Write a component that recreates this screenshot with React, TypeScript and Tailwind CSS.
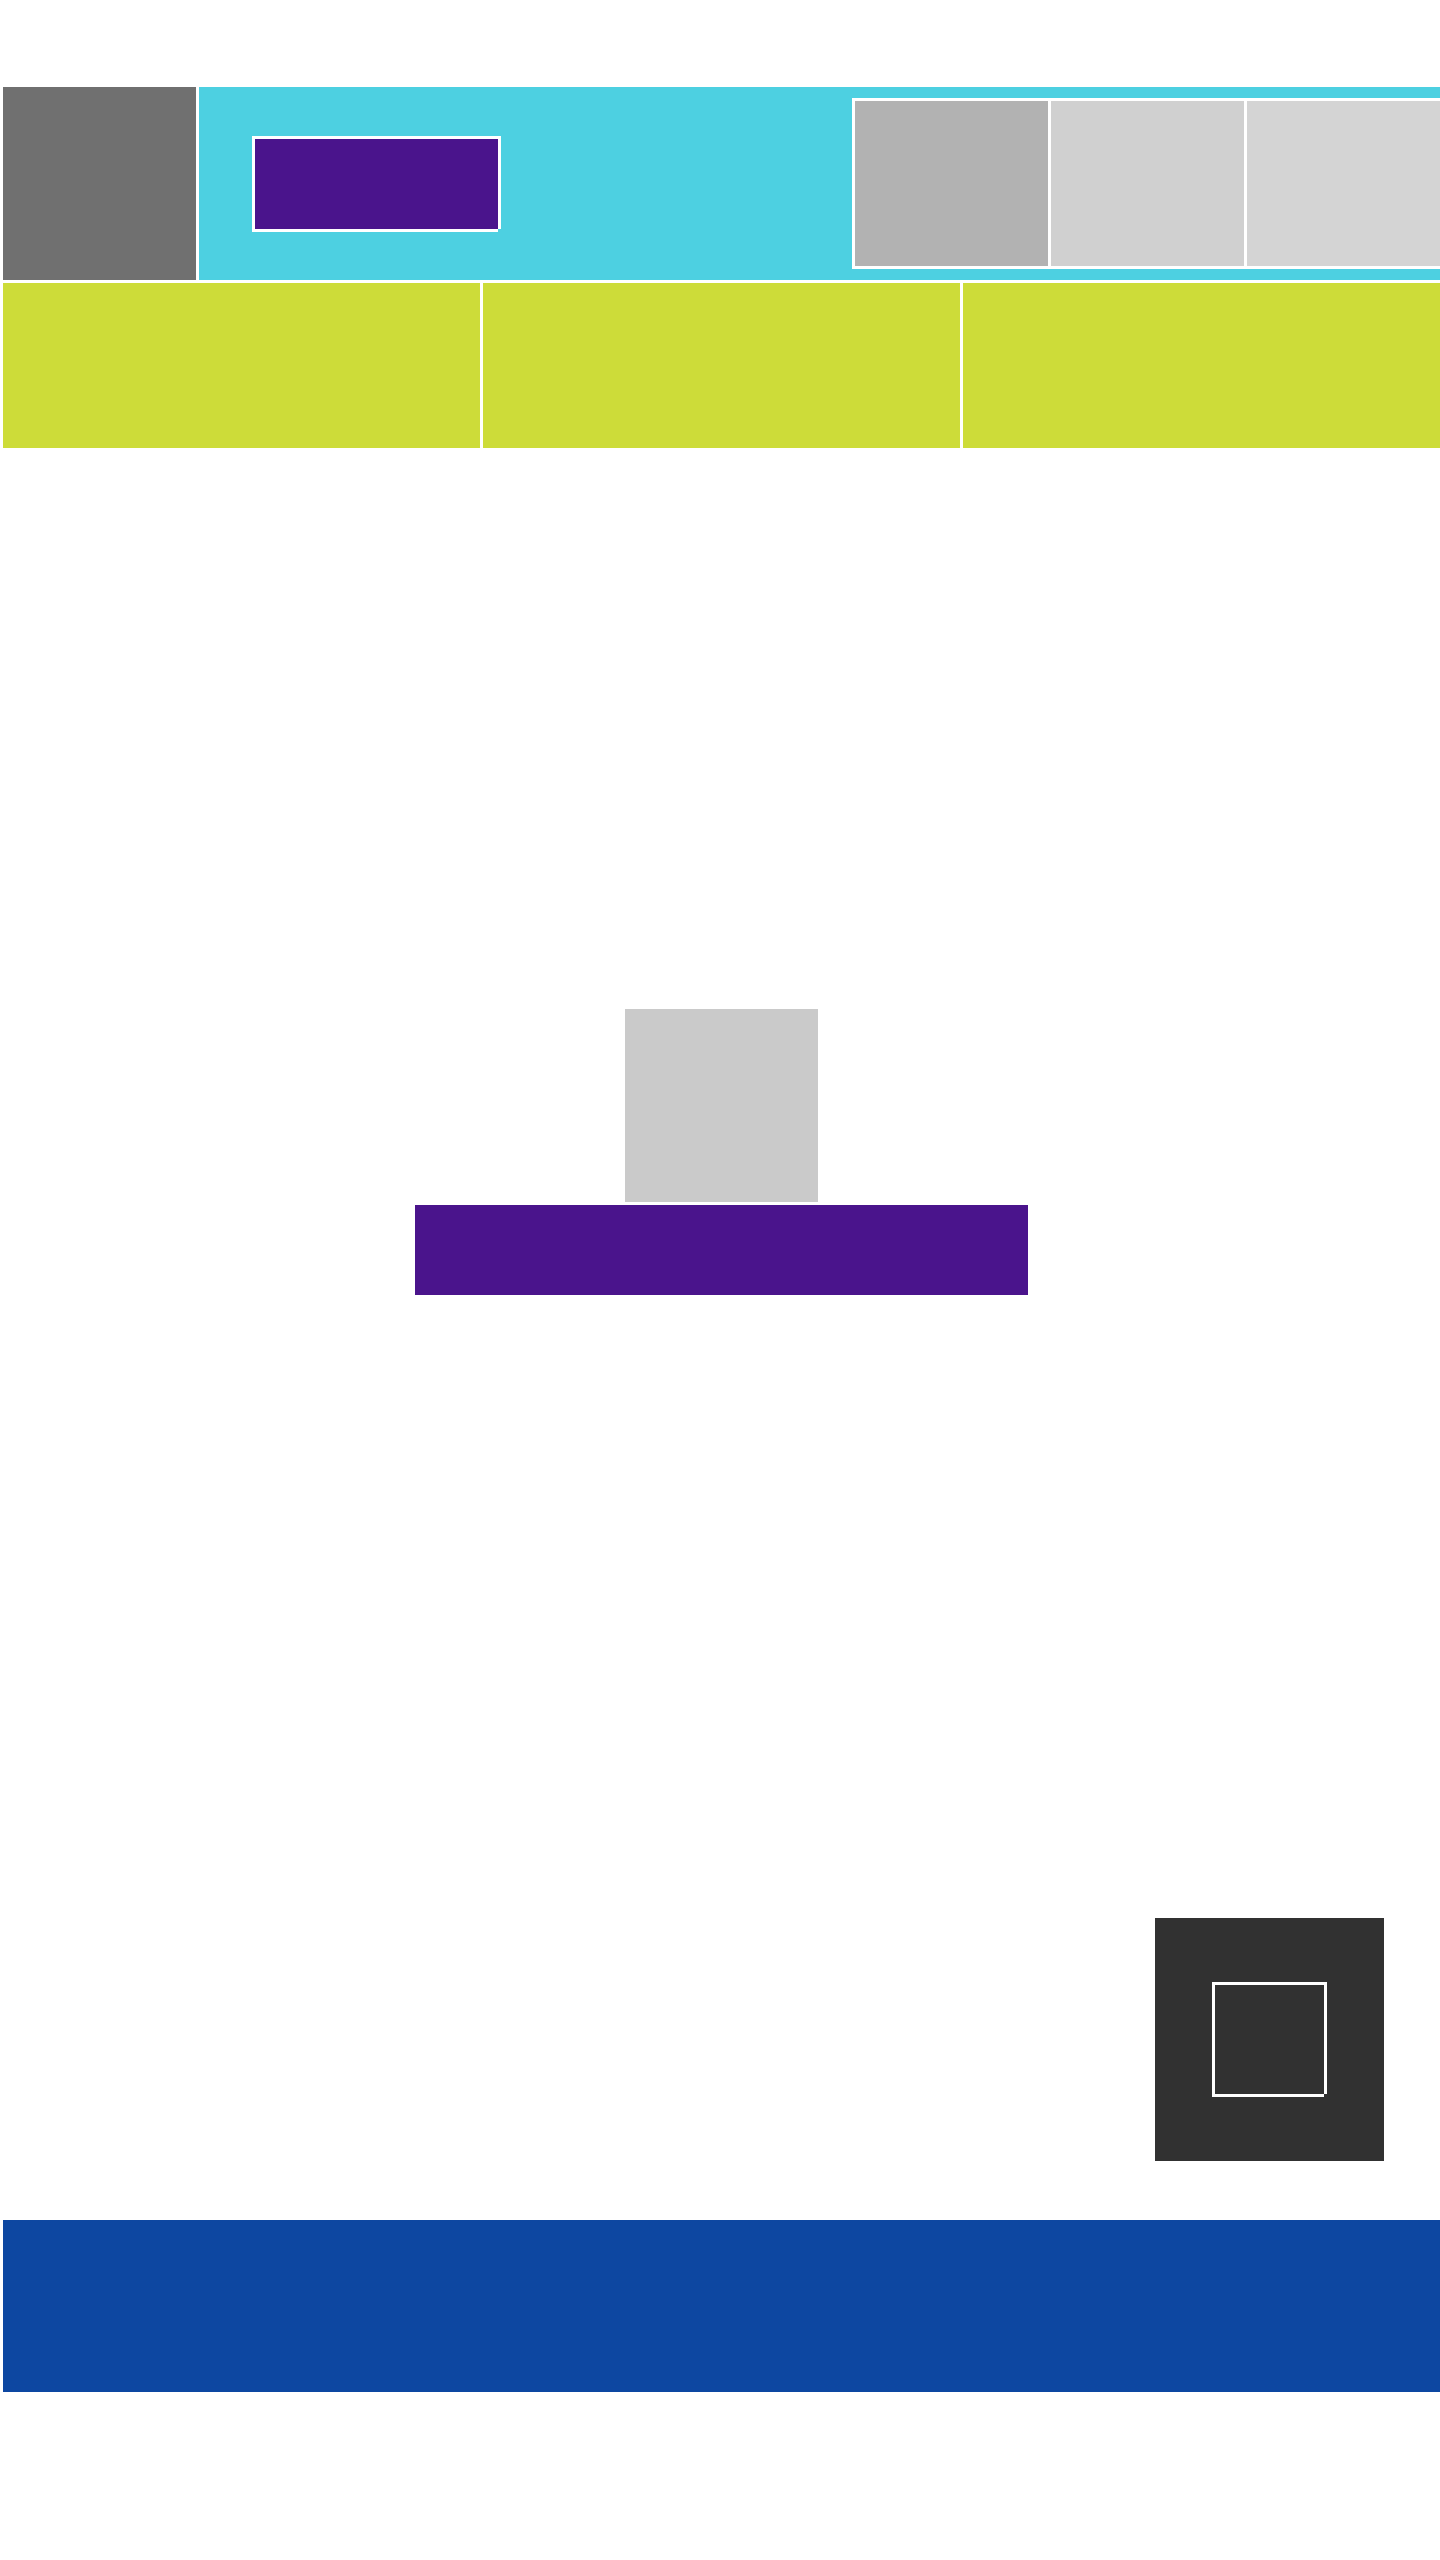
const notchedFrame =
  "shadow-[-3px_0_0_0_#fff,0_-3px_0_0_#fff,-3px_-3px_0_0_#fff,3px_-3px_0_0_#fff,3px_0_0_0_#fff,0_3px_0_0_#fff,-3px_3px_0_0_#fff]";

const Header = () => (
  <div className="flex gap-[3px] h-[193px]">
    <div className="w-[193px] shrink-0 bg-[#707070]" />
    <div className="flex-1 flex items-center justify-between bg-[#4dd0e1] overflow-hidden">
      <div className={`ml-[56px] w-[243px] h-[90px] bg-[#4a148c] ${notchedFrame}`} />
      <div className="w-[588px] shrink-0 flex gap-[3px] bg-white pl-[3px] py-[3px]">
        <div className="w-[193px] h-[165px] bg-[#b2b2b2]" />
        <div className="w-[193px] h-[165px] bg-[#d0d0d0]" />
        <div className="w-[193px] h-[165px] bg-[#d4d4d4]" />
      </div>
    </div>
  </div>
);

const App = () => {
  return (
    <div className="w-[1440px] min-h-[2560px] overflow-hidden bg-white pl-[3px] pt-[87px] flex flex-col">
      <Header />
      <div className="mt-[3px] grid grid-cols-3 gap-[3px] h-[165px]">
        <div className="bg-[#cddc39]" />
        <div className="bg-[#cddc39]" />
        <div className="bg-[#cddc39]" />
      </div>

      <div className="mt-[561px] flex flex-col items-center gap-[3px]">
        <div className="w-[193px] h-[193px] bg-[#cacaca]" />
        <div className="w-[613px] h-[90px] bg-[#4a148c]" />
      </div>

      <div className="mt-[623px] flex justify-end pr-[56px]">
        <div className="w-[229px] h-[243px] bg-[#313131] flex items-center justify-center">
          <div className={`w-[109px] h-[109px] bg-[#313131] ${notchedFrame}`} />
        </div>
      </div>

      <div className="mt-[59px] h-[172px] bg-[#0d47a1]" />
    </div>
  );
};

export default App;
